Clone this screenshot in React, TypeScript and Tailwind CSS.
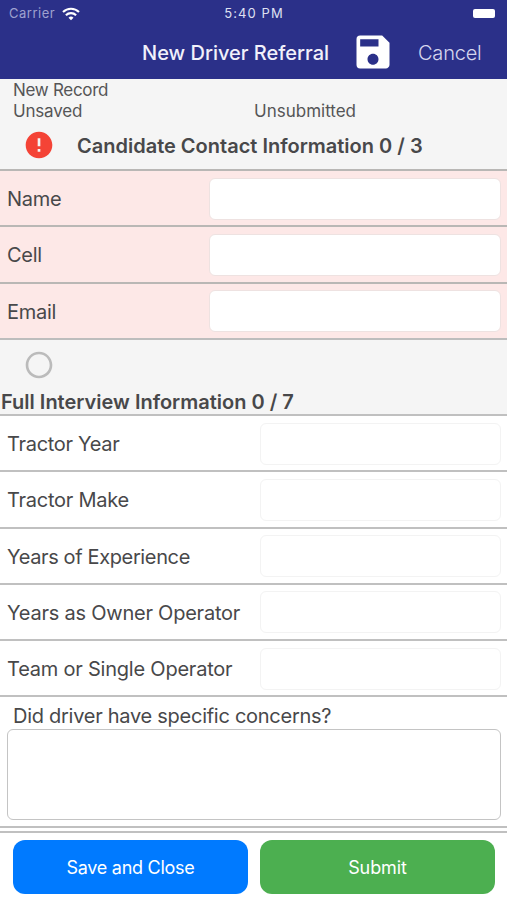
import { MdError, MdRadioButtonUnchecked, MdSave } from "react-icons/md";

const contactFields = ["Name", "Cell", "Email"];

const interviewFields = [
  { label: "Tractor Year", tracking: "tracking-[-0.3px]" },
  { label: "Tractor Make", tracking: "tracking-[-0.25px]" },
  { label: "Years of Experience", tracking: "tracking-[-0.37px]" },
  { label: "Years as Owner Operator", tracking: "tracking-[-0.23px]" },
  { label: "Team or Single Operator", tracking: "tracking-[-0.22px]" },
];

function WifiIcon() {
  return (
    <svg viewBox="0 0 18 14" className="-mt-px h-[14px] w-[18px]" fill="none" stroke="white" strokeWidth="2.1">
      <path d="M1 5.1a11.4 11.4 0 0 1 16 0" />
      <path d="M3.9 8.2a7.2 7.2 0 0 1 10.2 0" />
      <path d="M9 13.2 6.5 10.7a3.6 3.6 0 0 1 5 0Z" fill="white" stroke="none" />
    </svg>
  );
}

export default function App() {
  return (
    <div className="flex h-[900px] w-[507px] flex-col overflow-hidden bg-white font-['Inter','Liberation_Sans',sans-serif] text-[#48484a]">
      <header className="h-[79px] shrink-0 bg-[#2b3089] text-white">
        <div className="grid h-7 grid-cols-3 items-center pr-3 pl-[9px] text-[13px]">
          <div className="flex items-center gap-[7px]">
            <span className="tracking-[0.5px] text-[#9fa2cf]">Carrier</span>
            <WifiIcon />
          </div>
          <span className="pl-[4px] text-center tracking-[1.1px] text-[#dfe0f2]">5:40 PM</span>
          <span className="-mt-px h-[9px] w-[22px] justify-self-end rounded-[2px] bg-white" />
        </div>
        <div className="flex h-[48px] items-center pl-[142px]">
          <h1 className="w-[209px] pt-px text-[20px] font-medium whitespace-nowrap text-[#f1f1fb]">New Driver Referral</h1>
          <MdSave className="size-[44px] shrink-0" />
          <button className="ml-[23px] pt-px text-[20px] font-light tracking-[-0.2px] text-[#d5d6ee]">Cancel</button>
        </div>
      </header>

      <section className="h-[90px] shrink-0 bg-[#f5f5f5]">
        <div className="grid grid-cols-[241px_1fr] pt-px pl-[13px] text-[17px] leading-[21px] text-[#555557]">
          <span className="col-span-2 tracking-[-0.3px]">New Record</span>
          <span className="tracking-[-0.2px]">Unsaved</span>
          <span>Unsubmitted</span>
        </div>
        <div className="flex h-[46px] items-center pl-[23px]">
          <MdError className="size-[32px] text-[#f44336]" />
          <h2 className="ml-[22px] pt-[2px] text-[20px] font-semibold whitespace-nowrap">
            Candidate Contact Information 0 / 3
          </h2>
        </div>
      </section>

      {contactFields.map((label) => (
        <label
          key={label}
          className="flex h-[56.25px] shrink-0 items-center justify-between border-t-2 border-[#b9b7b5] bg-[#fde8e7] pt-px pr-[6px] pl-[7px] text-[20px]"
        >
          <span className="pt-px tracking-[-0.25px]">{label}</span>
          <input className="h-[42px] w-[292px] rounded-[6px] border border-[#eee2e1] bg-white" />
        </label>
      ))}

      <section className="h-[76.25px] shrink-0 border-t-2 border-[#bdbdbd] bg-[#f5f5f5]">
        <div className="flex h-[50px] items-center pl-[23px]">
          <MdRadioButtonUnchecked className="size-[32px] text-[#bbbbbb]" />
        </div>
        <h2 className="pl-[1px] text-[20px] leading-[25px] font-semibold whitespace-nowrap">
          Full Interview Information 0 / 7
        </h2>
      </section>

      {interviewFields.map(({ label, tracking }) => (
        <label
          key={label}
          className="flex h-[56.25px] shrink-0 items-center justify-between border-t-2 border-[#c0c0c0] pt-px pr-[6px] pl-[7px] text-[20px]"
        >
          <span className={`pt-px ${tracking}`}>{label}</span>
          <input className="h-[42px] w-[241px] rounded-[6px] border border-[#f3f3f3] bg-white" />
        </label>
      ))}

      <section className="flex h-[131px] shrink-0 flex-col border-t-2 border-[#c0c0c0] pr-[6px] pl-[7px]">
        <span className="mt-[7px] pl-[6px] text-[20px] leading-[25px] tracking-[-0.27px]">
          Did driver have specific concerns?
        </span>
        <textarea className="h-[91px] resize-none rounded-[6px] border-[1.5px] border-[#c4c4c4]" />
      </section>

      <footer className="flex grow flex-col border-t-2 border-[#c0c0c0]">
        <div className="mt-[3px] border-t-2 border-[#c0c0c0]" />
        <div className="mt-[7px] flex gap-3 pr-3 pl-[13px] text-[18px] text-white">
          <button className="h-[54px] flex-1 rounded-[12px] bg-[#007aff] tracking-[-0.27px]">Save and Close</button>
          <button className="h-[54px] flex-1 rounded-[12px] bg-[#4caf50] tracking-[-0.1px]">Submit</button>
        </div>
      </footer>
    </div>
  );
}
